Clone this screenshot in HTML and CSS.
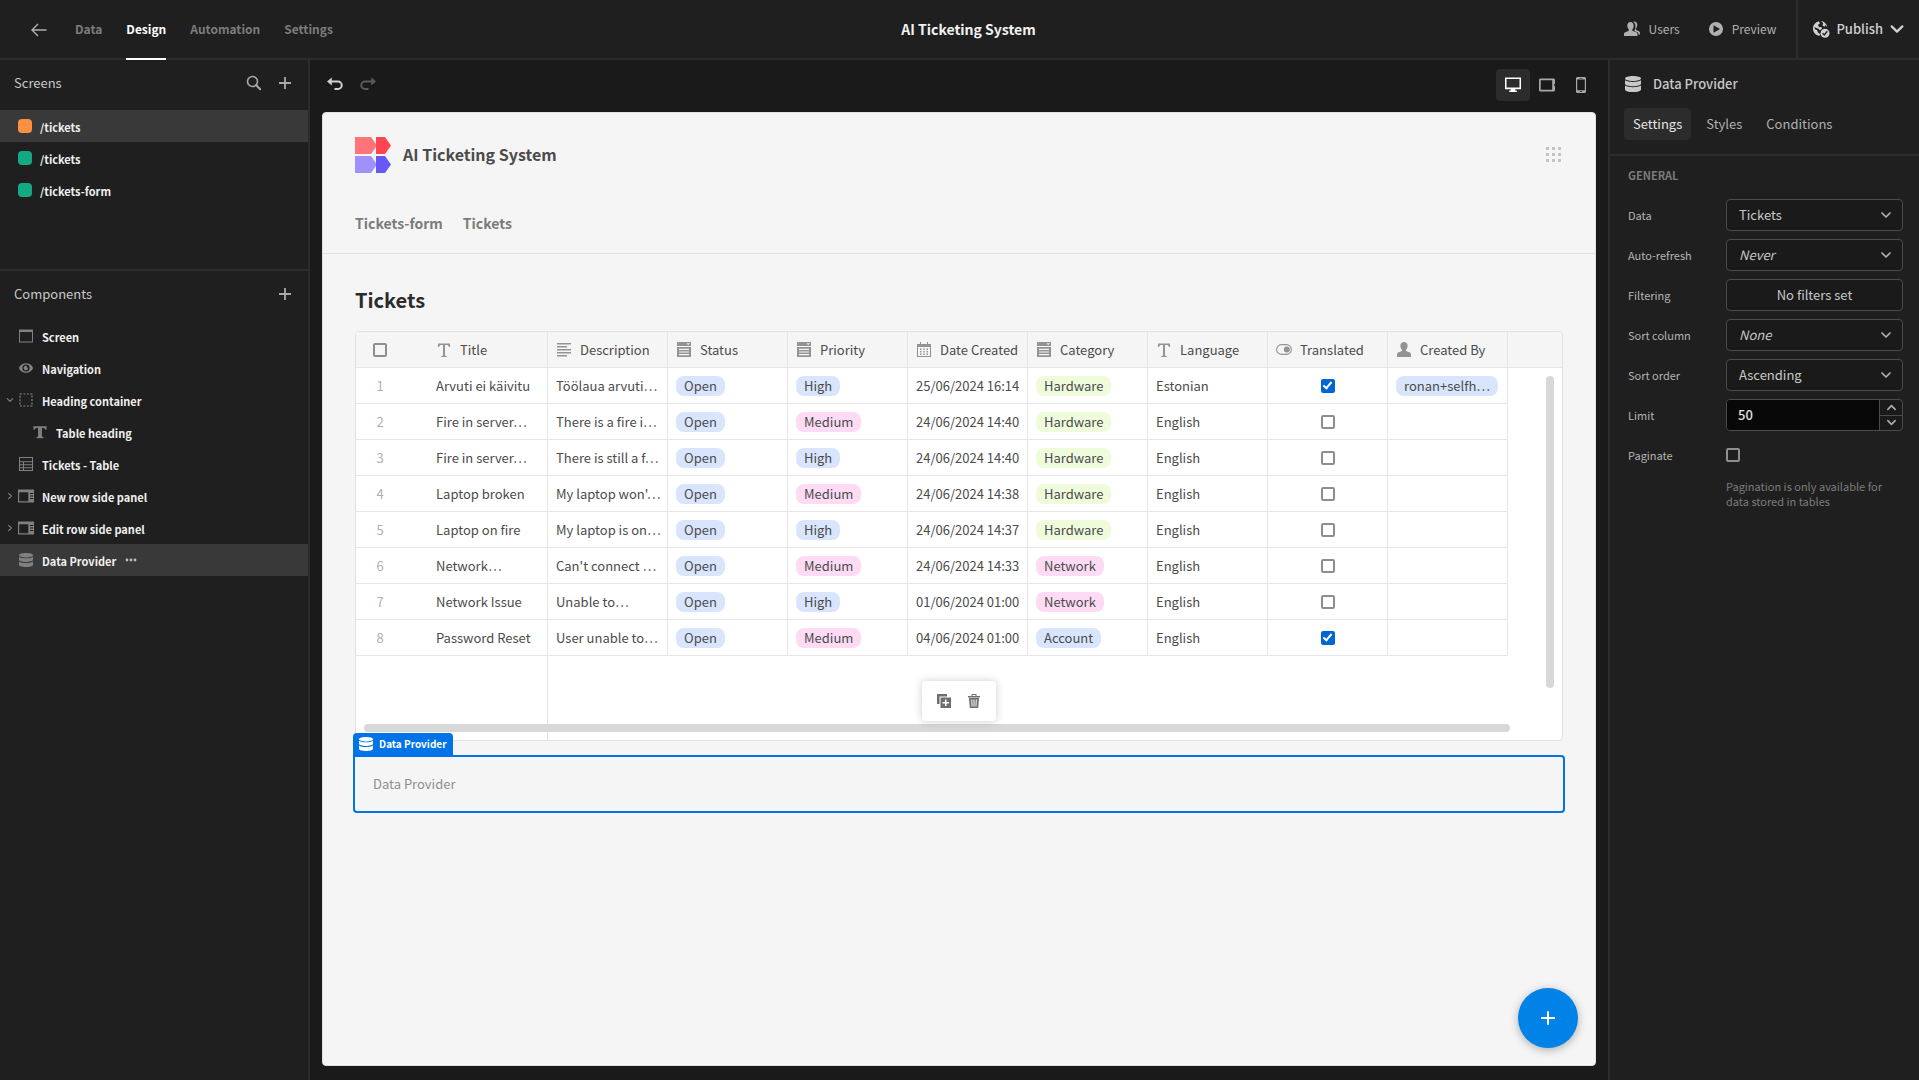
FILE: index.html
```html
<!DOCTYPE html>
<html lang="en">
<head>
<meta charset="utf-8">
<title>AI Ticketing System</title>
<meta name="viewport" content="width=device-width, initial-scale=1">
<link rel="stylesheet" href="styles.css">
</head>
<body>
<svg class="sprite" aria-hidden="true">
  <symbol id="i-text" viewBox="0 0 16 16"><path d="M2 1.500h12v3.600h-1.200C12.500 3.500 12.200 3 11 3H9v10c0 .8.400 1 1.800 1.100V15H5.200v-.9C6.600 14 7 13.800 7 13V3H5C3.800 3 3.500 3.500 3.200 5.100H2z"/></symbol>
  <symbol id="i-textbold" viewBox="0 0 16 16"><path d="M.5 1.500h15v4h-1.500C13.700 4 13.400 3.400 12 3.400h-1.800v9.200c0 .9.500 1.200 1.900 1.300V15H3.900v-1.100c1.400-.1 1.900-.4 1.900-1.300V3.400H4C2.600 3.400 2.300 4 2 5.500H.5z"/></symbol>
  <symbol id="i-lines" viewBox="0 0 16 16"><path d="M1 1h14v1.500H1zM1 4h10v1.500H1zM1 7h14v1.500H1zM1 10h14v1.500H1zM1 13h10v1.500H1z"/></symbol>
  <symbol id="i-dropdown" viewBox="0 0 16 16"><path fill-rule="evenodd" d="M1 0h14v4H1zm9.500 1.200 1.700 1.700 1.700-1.700zM1 5h14v10H1zM3 6.700v1.200h10V6.700zm0 2.700v1.200h10V9.400zm0 2.700v1.200h10v-1.200z"/></symbol>
  <symbol id="i-calendar" viewBox="0 0 16 16"><path fill-rule="evenodd" d="M4 0h1v2h6V0h1v2h3v13H1V2h3zM2 5v9h12V5zm2 1.500h1.500V8H4zm3.200 0h1.500V8H7.200zm3.300 0H12V8h-1.500zM4 9h1.500v1.500H4zm3.200 0h1.500v1.500H7.200zm3.300 0H12v1.500h-1.500zM4 11.500h1.500V13H4zm3.200 0h1.500V13H7.200zm3.300 0H12V13h-1.500z"/></symbol>
  <symbol id="i-toggle" viewBox="0 0 16 16"><rect x=".6" y="2.600" width="14.800" height="9.800" rx="4.900" fill="none" stroke="currentColor" stroke-width="1.100"/><circle cx="10.800" cy="7.500" r="3"/></symbol>
  <symbol id="i-user" viewBox="0 0 16 16"><path d="M8 0c2.200 0 3.600 1.600 3.600 3.900 0 1.500-.6 2.900-1.400 3.700-.4.500-.3 1.400.4 1.700l3.200 1.200c.8.300 1.200 1 1.200 1.800V15H1v-2.700c0-.8.500-1.500 1.200-1.800l3.200-1.200c.7-.3.800-1.200.4-1.700-.8-.8-1.400-2.200-1.400-3.700C4.400 1.600 5.800 0 8 0z"/></symbol>
  <symbol id="i-users" viewBox="0 0 18 16"><path d="M7.500 1C9.400 1 10.700 2.500 10.700 4.600c0 1.500-.5 2.800-1.200 3.700-.4.500-.3 1.400.4 1.700l3.300 1.300c.8.300 1.300 1 1.300 1.800V15H1v-1.900c0-.8.500-1.500 1.300-1.800L5.200 10c.7-.3.800-1.200.4-1.700-.8-.9-1.300-2.200-1.300-3.700C4.300 2.500 5.600 1 7.500 1z"/><path d="M10.300.7c2.200-.5 4 1 4 3.400 0 1.500-.6 2.500-1.300 3.400-.4.500-.2 1.300.4 1.600l2.500 1.200c.7.300 1.100.9 1.100 1.700v1.500h-1.400c-.1-1.300-.7-2-1.800-2.400l-2.500-1.200c.7-1.200 1.200-2.900 1.200-4.600 0-1.900-.8-3.500-2.200-4.600z"/></symbol>
  <symbol id="i-play" viewBox="0 0 16 16"><path fill-rule="evenodd" d="M8 1a7 7 0 1 1 0 14A7 7 0 0 1 8 1zM5.500 4.300v7.400L12 8z"/></symbol>
  <symbol id="i-globe" viewBox="0 0 18 18"><path d="M6.800 1.200C3.500 2 1 5 1 8.500c0 3.800 2.800 7 6.500 7.400l.6-2-2.200-1.300-.7-2.400L3 9.300l-.7-2.200 1.600.6 2.400 1 1.700 1.500L9.600 9l.7-1-1.600-1-1.700.2-1-2.400 2-1.400zM9 1l2.200 2.300-.7 2.200 2 1.200 1-1.600 1.600 1.800.4 1.300c-.2-3.600-2.900-6.600-6.500-7.200z"/><circle cx="13" cy="13.200" r="4.500"/><path d="M10.600 13.300l1.700 1.700 3-3.700" fill="none" stroke="#1f1f1f" stroke-width="1.400"/></symbol>
  <symbol id="i-chevron" viewBox="0 0 12 12"><path d="M2 4l4 4 4-4" fill="none" stroke="currentColor" stroke-width="1.700" stroke-linecap="round" stroke-linejoin="round"/></symbol>
  <symbol id="i-plus" viewBox="0 0 14 14"><path d="M6.100 1h1.800v5.100H13v1.800H7.900V13H6.100V7.900H1V6.100h5.100z"/></symbol>
  <symbol id="i-search" viewBox="0 0 16 16"><path d="M10.300 10.300 14.200 14.200" stroke="currentColor" stroke-width="2" stroke-linecap="round"/><circle cx="6.500" cy="6.500" r="5" fill="none" stroke="currentColor" stroke-width="1.600"/></symbol>
  <symbol id="i-back" viewBox="0 0 16 16"><path d="M15.500 8H1.200M7 2 1 8l6 6" fill="none" stroke="currentColor" stroke-width="1.400"/></symbol>
  <symbol id="i-undo" viewBox="0 0 16 16"><path d="M4 4.500h7a3.700 3.700 0 0 1 0 7.500H7.500" fill="none" stroke="currentColor" stroke-width="2"/><path d="M4.800.5v8L0 4.500z"/></symbol>
  <symbol id="i-redo" viewBox="0 0 16 16"><path d="M12 4.500H5A3.700 3.700 0 0 0 5 12h3.500" fill="none" stroke="currentColor" stroke-width="2"/><path d="M11.200.5v8l4.800-4z"/></symbol>
  <symbol id="i-desktop" viewBox="0 0 16 16"><path fill-rule="evenodd" d="M0 .5h16v11.700h-5.800v1.300h1.600V15H4.200v-1.500h1.600v-1.300H0zM1.500 2v8.600h13V2z"/></symbol>
  <symbol id="i-tablet" viewBox="0 0 16 16"><path fill-rule="evenodd" d="M1 1.500h14l1 1v4.200l-.8.500v1.600l.8.500v4.200l-1 1H1l-1-1v-11zM1.700 3.200v9.600h11.500V3.200z"/></symbol>
  <symbol id="i-phone" viewBox="0 0 16 16"><path fill-rule="evenodd" d="M4 0h8l1 1v14l-1 1H4l-1-1V1zm.2 2.400v10.800h7.600V2.400zM6.500.9v.6h3V.9zm.7 13.200v1h1.600v-1z"/></symbol>
  <symbol id="i-data" viewBox="0 0 16 16"><path d="M8 0c4.400 0 8 1 8 2.500S12.400 5 8 5 0 4 0 2.500 3.600 0 8 0z"/><path d="M0 4.300C1.800 5.500 5 6 8 6s6.200-.5 8-1.700v3.500C16 9.300 12.400 10.300 8 10.300S0 9.300 0 7.800z"/><path d="M0 9.600c1.800 1.200 5 1.700 8 1.700s6.200-.5 8-1.700v3.800C16 15 12.400 16 8 16s-8-1-8-2.600z"/></symbol>
  <symbol id="i-screen" viewBox="0 0 14 14"><path fill-rule="evenodd" d="M0 .5h14v13H0zm1 2.500v9.500h12V3z"/></symbol>
  <symbol id="i-eye" viewBox="0 0 14 14"><path fill-rule="evenodd" d="M7 2.200c3.800 0 7 3.200 7 4.800s-3.200 4.800-7 4.800S0 8.600 0 7s3.200-4.800 7-4.800zm0 1.200a3.600 3.600 0 1 0 0 7.200 3.600 3.600 0 0 0 0-7.200z"/><path d="M7 4.800c.5 0 .8.100 1 .2a1.100 1.100 0 0 0 1 1.700A2.200 2.200 0 1 1 7 4.800z"/></symbol>
  <symbol id="i-dashed" viewBox="0 0 14 14"><rect x="1" y="1" width="12" height="12" fill="none" stroke="currentColor" stroke-width="1.200" stroke-dasharray="2 1.400"/></symbol>
  <symbol id="i-table" viewBox="0 0 14 14"><path fill-rule="evenodd" d="M0 0h14v14H0zm1 1v3.300h12V1zm0 4.300v2h3v-2zm4 0v2h8v-2zm-4 3v2h3v-2zm4 0v2h8v-2zm-4 3V13h3v-1.700zm4 0V13h8v-1.700z"/></symbol>
  <symbol id="i-panel" viewBox="0 0 16 14"><path fill-rule="evenodd" d="M0 .5h16v13H0zm1.200 2.700v9.100h9.100V3.200zM12 4v1h3V4zm0 2.500v1h3v-1zM12 9v1h3V9z"/></symbol>
  <symbol id="i-copy" viewBox="0 0 16 16"><path d="M1 1h10v2.500H3.500V11H1z"/><path fill-rule="evenodd" d="M4.500 4.500H15V15H4.500zM9 6.500V9H6.500v1.500H9V13h1.500v-2.500H13V9h-2.500V6.500z"/></symbol>
  <symbol id="i-trash" viewBox="0 0 16 16"><path fill-rule="evenodd" d="M5.500 1h5v2H14v1.500H2V3h3.500zm1 1v1h3V2zM3 5h10l-.8 10H3.800zm2.200 1.500.4 7h.9l-.3-7zm2.300 0v7h1v-7zm2.300 0-.3 7h.9l.4-7z"/></symbol>
  <symbol id="i-apps" viewBox="0 0 15 15"><path d="M0 0h3v3H0zM6 0h3v3H6zM12 0h3v3h-3zM0 6h3v3H0zM6 6h3v3H6zM12 6h3v3h-3zM0 12h3v3H0zM6 12h3v3H6zM12 12h3v3h-3z"/></symbol>
  <symbol id="i-more" viewBox="0 0 12 12"><circle cx="2" cy="6" r="1.400"/><circle cx="6" cy="6" r="1.400"/><circle cx="10" cy="6" r="1.400"/></symbol>
</svg>

<header class="topbar">
  <nav class="topbar-left">
    <a class="back" href="#" aria-label="Back"><svg class="icon"><use href="#i-back"/></svg></a>
    <a class="tab" href="#">Data</a>
    <a class="tab is-active" href="#">Design</a>
    <a class="tab" href="#">Automation</a>
    <a class="tab" href="#">Settings</a>
  </nav>
  <div class="app-name">AI Ticketing System</div>
  <div class="topbar-right">
    <button class="action"><svg class="icon icon-wide"><use href="#i-users"/></svg>Users</button>
    <button class="action"><svg class="icon"><use href="#i-play"/></svg>Preview</button>
    <button class="publish"><svg class="icon icon-lg"><use href="#i-globe"/></svg>Publish<svg class="icon"><use href="#i-chevron"/></svg></button>
  </div>
</header>

<div class="builder">
  <aside class="sidebar">
    <section class="screens">
      <div class="panel-head"><h2>Screens</h2>
        <button aria-label="Search"><svg class="icon"><use href="#i-search"/></svg></button>
        <button aria-label="Add screen"><svg class="icon-sm"><use href="#i-plus"/></svg></button>
      </div>
      <ul class="list">
        <li class="item screen is-selected"><span class="dot dot-orange"></span><a href="#">/tickets</a></li>
        <li class="item screen"><span class="dot"></span><a href="#">/tickets</a></li>
        <li class="item screen"><span class="dot"></span><a href="#">/tickets-form</a></li>
      </ul>
    </section>
    <section class="components">
      <div class="panel-head"><h2>Components</h2>
        <button aria-label="Add component"><svg class="icon-sm"><use href="#i-plus"/></svg></button>
      </div>
      <ul class="list">
        <li class="item"><span class="caret"></span><svg class="icon"><use href="#i-screen"/></svg><a href="#">Screen</a></li>
        <li class="item"><span class="caret"></span><svg class="icon"><use href="#i-eye"/></svg><a href="#">Navigation</a></li>
        <li class="item"><svg class="caret"><use href="#i-chevron"/></svg><svg class="icon"><use href="#i-dashed"/></svg><a href="#">Heading container</a></li>
        <li class="item nested"><span class="caret"></span><svg class="icon"><use href="#i-textbold"/></svg><a href="#">Table heading</a></li>
        <li class="item"><span class="caret"></span><svg class="icon"><use href="#i-table"/></svg><a href="#">Tickets - Table</a></li>
        <li class="item"><svg class="caret is-closed"><use href="#i-chevron"/></svg><svg class="icon icon-panel"><use href="#i-panel"/></svg><a href="#">New row side panel</a></li>
        <li class="item"><svg class="caret is-closed"><use href="#i-chevron"/></svg><svg class="icon icon-panel"><use href="#i-panel"/></svg><a href="#">Edit row side panel</a></li>
        <li class="item is-selected"><span class="caret"></span><svg class="icon"><use href="#i-data"/></svg><a href="#">Data Provider</a><button class="more" aria-label="More"><svg><use href="#i-more"/></svg></button></li>
      </ul>
    </section>
  </aside>

  <main class="stage">
    <div class="toolbar">
      <button class="undo" aria-label="Undo"><svg class="icon"><use href="#i-undo"/></svg></button>
      <button class="redo" aria-label="Redo" disabled><svg class="icon"><use href="#i-redo"/></svg></button>
      <div class="devices">
        <button class="device is-active" aria-label="Desktop"><svg class="icon"><use href="#i-desktop"/></svg></button>
        <button class="device" aria-label="Tablet"><svg class="icon"><use href="#i-tablet"/></svg></button>
        <button class="device" aria-label="Mobile"><svg class="icon"><use href="#i-phone"/></svg></button>
      </div>
    </div>
    <div class="preview">
      <header class="app-head">
        <div class="brand">
          <svg class="logo" viewBox="0 0 36 36" aria-hidden="true">
            <path fill="#ff7479" d="M0 0h16l6 8.500L16 17H0z"/><path fill="#ff4552" d="M21 0h9l6 8.500L30 17h-9z"/>
            <path fill="#9f90fa" d="M0 19h16l6 8.500L16 36H0z"/><path fill="#6a58f6" d="M21 19h9l6 8.500L30 36h-9z"/>
          </svg>
          <h1>AI Ticketing System</h1>
          <button class="apps" aria-label="Apps"><svg><use href="#i-apps"/></svg></button>
        </div>
        <nav class="app-nav"><a href="#">Tickets-form</a><a href="#">Tickets</a></nav>
      </header>
      <div class="app-body">
        <h2 class="heading">Tickets</h2>
        <div class="grid">
          <table>
            <colgroup><col class="c-gutter"><col class="c"><col class="c"><col class="c"><col class="c"><col class="c"><col class="c"><col class="c"><col class="c"><col class="c"><col></colgroup>
            <thead><tr>
              <th class="gutter"><input type="checkbox" aria-label="Select all"></th>
              <th><span><svg class="icon"><use href="#i-text"/></svg>Title</span></th>
              <th><span><svg class="icon"><use href="#i-lines"/></svg>Description</span></th>
              <th><span><svg class="icon"><use href="#i-dropdown"/></svg>Status</span></th>
              <th><span><svg class="icon"><use href="#i-dropdown"/></svg>Priority</span></th>
              <th><span><svg class="icon"><use href="#i-calendar"/></svg>Date Created</span></th>
              <th><span><svg class="icon"><use href="#i-dropdown"/></svg>Category</span></th>
              <th><span><svg class="icon"><use href="#i-text"/></svg>Language</span></th>
              <th><span><svg class="icon"><use href="#i-toggle"/></svg>Translated</span></th>
              <th><span><svg class="icon"><use href="#i-user"/></svg>Created By</span></th>
              <th class="rest"></th>
            </tr></thead>
            <tbody>
              <tr><td class="gutter">1</td><td>Arvuti ei käivitu</td><td>Töölaua arvuti…</td><td><span class="tag">Open</span></td><td><span class="tag">High</span></td><td>25/06/2024 16:14</td><td><span class="tag green">Hardware</span></td><td>Estonian</td><td class="check"><input type="checkbox" checked aria-label="Translated"></td><td><span class="tag">ronan+selfh…</span></td><td class="rest"></td></tr>
              <tr><td class="gutter">2</td><td>Fire in server…</td><td>There is a fire i…</td><td><span class="tag">Open</span></td><td><span class="tag pink">Medium</span></td><td>24/06/2024 14:40</td><td><span class="tag green">Hardware</span></td><td>English</td><td class="check"><input type="checkbox" aria-label="Translated"></td><td></td><td class="rest"></td></tr>
              <tr><td class="gutter">3</td><td>Fire in server…</td><td>There is still a f…</td><td><span class="tag">Open</span></td><td><span class="tag">High</span></td><td>24/06/2024 14:40</td><td><span class="tag green">Hardware</span></td><td>English</td><td class="check"><input type="checkbox" aria-label="Translated"></td><td></td><td class="rest"></td></tr>
              <tr><td class="gutter">4</td><td>Laptop broken</td><td>My laptop won'…</td><td><span class="tag">Open</span></td><td><span class="tag pink">Medium</span></td><td>24/06/2024 14:38</td><td><span class="tag green">Hardware</span></td><td>English</td><td class="check"><input type="checkbox" aria-label="Translated"></td><td></td><td class="rest"></td></tr>
              <tr><td class="gutter">5</td><td>Laptop on fire</td><td>My laptop is on…</td><td><span class="tag">Open</span></td><td><span class="tag">High</span></td><td>24/06/2024 14:37</td><td><span class="tag green">Hardware</span></td><td>English</td><td class="check"><input type="checkbox" aria-label="Translated"></td><td></td><td class="rest"></td></tr>
              <tr><td class="gutter">6</td><td>Network…</td><td>Can't connect …</td><td><span class="tag">Open</span></td><td><span class="tag pink">Medium</span></td><td>24/06/2024 14:33</td><td><span class="tag pink">Network</span></td><td>English</td><td class="check"><input type="checkbox" aria-label="Translated"></td><td></td><td class="rest"></td></tr>
              <tr><td class="gutter">7</td><td>Network Issue</td><td>Unable to…</td><td><span class="tag">Open</span></td><td><span class="tag">High</span></td><td>01/06/2024 01:00</td><td><span class="tag pink">Network</span></td><td>English</td><td class="check"><input type="checkbox" aria-label="Translated"></td><td></td><td class="rest"></td></tr>
              <tr><td class="gutter">8</td><td>Password Reset</td><td>User unable to…</td><td><span class="tag">Open</span></td><td><span class="tag pink">Medium</span></td><td>04/06/2024 01:00</td><td><span class="tag">Account</span></td><td>English</td><td class="check"><input type="checkbox" checked aria-label="Translated"></td><td></td><td class="rest"></td></tr>
            </tbody>
            <tfoot><tr><td colspan="2"></td><td class="rest" colspan="9"></td></tr></tfoot>
          </table>
          <div class="scroll-y"></div>
          <div class="scroll-x"></div>
        </div>
        <div class="provider">
          <div class="provider-label"><svg><use href="#i-data"/></svg>Data Provider</div>
          <div class="provider-tools">
            <button aria-label="Duplicate"><svg class="icon"><use href="#i-copy"/></svg></button>
            <button aria-label="Delete"><svg class="icon"><use href="#i-trash"/></svg></button>
          </div>
          Data Provider
        </div>
      </div>
      <button class="fab" aria-label="Add row"><svg><use href="#i-plus"/></svg></button>
    </div>
  </main>

  <aside class="settings">
    <div class="settings-title"><svg class="icon"><use href="#i-data"/></svg>Data Provider</div>
    <div class="settings-tabs">
      <button class="is-active">Settings</button><button>Styles</button><button>Conditions</button>
    </div>
    <form class="fields">
      <h3>GENERAL</h3>
      <div class="field"><label for="data">Data</label><div class="select"><select id="data"><option>Tickets</option></select><svg><use href="#i-chevron"/></svg></div></div>
      <div class="field"><label for="refresh">Auto-refresh</label><div class="select"><select id="refresh" class="empty"><option>Never</option></select><svg><use href="#i-chevron"/></svg></div></div>
      <div class="field"><label for="filter">Filtering</label><button type="button" id="filter" class="filter">No filters set</button></div>
      <div class="field"><label for="sortcol">Sort column</label><div class="select"><select id="sortcol" class="empty"><option>None</option></select><svg><use href="#i-chevron"/></svg></div></div>
      <div class="field"><label for="sortord">Sort order</label><div class="select"><select id="sortord"><option>Ascending</option></select><svg><use href="#i-chevron"/></svg></div></div>
      <div class="field"><label for="limit">Limit</label>
        <div class="stepper"><input type="number" id="limit" value="50">
          <div class="steps"><button type="button" aria-label="Increase"><svg class="up"><use href="#i-chevron"/></svg></button><button type="button" aria-label="Decrease"><svg><use href="#i-chevron"/></svg></button></div>
        </div>
      </div>
      <div class="field"><label for="paginate">Paginate</label><input type="checkbox" id="paginate"></div>
      <p class="help">Pagination is only available for data stored in tables</p>
    </form>
  </aside>
</div>
</body>
</html>
```
FILE: styles.css
```css
*, *::before, *::after { box-sizing: border-box; }

body {
  margin: 0;
  min-height: 100vh;
  display: flex;
  flex-direction: column;
  background: #1a1a1a;
  color: #c8c8c8;
  font: 400 13px/20px "Noto Sans CJK SC", "Source Sans 3", sans-serif;
}

h1, h2, h3, p, ul { margin: 0; padding: 0; }
ul { list-style: none; }
a { color: inherit; text-decoration: none; }
button { margin: 0; padding: 0; border: 0; background: none; color: inherit; font: inherit; cursor: pointer; }
svg { fill: currentColor; display: block; flex: none; }
.sprite { position: absolute; width: 0; height: 0; }
.icon { width: 16px; height: 16px; }
.icon-wide { width: 18px; }
.icon-lg { width: 18px; height: 18px; }
.icon-sm { width: 14px; height: 14px; }

/* Top bar */
.topbar {
  display: grid;
  grid-template-columns: 1fr auto 1fr;
  height: 60px;
  padding-left: 18px;
  background: #1f1f1f;
  border-bottom: 2px solid #2c2c2c;
}
.topbar-left { display: flex; gap: 24px; }
.back { display: flex; align-items: center; padding-left: 13px; width: 33px; color: #b0b0b0; }
.tab { display: flex; align-items: center; height: 60px; padding-bottom: 2px; color: #7c7c7c; font-size: 12px; font-weight: 700; }
.tab.is-active { color: #fff; border-bottom: 2px solid #fff; padding-bottom: 0; }
.app-name { align-self: center; padding-bottom: 2px; color: #f2f2f2; font-size: 14px; font-weight: 700; }
.topbar-right { display: flex; justify-content: flex-end; }
.action { display: flex; align-items: center; gap: 8px; margin-right: 20px; padding: 0 0 2px 8px; color: #b0b0b0; font-size: 12px; }
.publish { display: flex; align-items: center; gap: 6px; padding: 0 14px 2px; color: #d0d0d0; font-weight: 500; border-left: 2px solid #2c2c2c; }

.builder { flex: 1; display: flex; align-items: stretch; }

/* Left sidebar */
.sidebar { width: 310px; background: #1f1f1f; border-right: 2px solid #2c2c2c; }
.screens { min-height: 211px; border-bottom: 2px solid #2c2c2c; }
.panel-head { display: flex; align-items: center; gap: 16px; height: 46px; padding: 0 16px 0 14px; color: #a8a8a8; }
.panel-head h2 { flex: 1; font-size: 13px; font-weight: 400; color: #c8c8c8; }
.list { padding-top: 4px; }
.components .list { padding-top: 3px; }
.item { display: flex; align-items: center; height: 32px; color: #f0f0f0; font-size: 11px; font-weight: 700; }
.item a { padding-top: 1px; }
.item .icon { margin: 0 8px 0 4px; color: #808080; padding: 1px; }
.item .icon-panel { padding: 0; }
.item .caret { width: 8px; height: 8px; margin: 0 0 0 6px; color: #808080; }
.caret.is-closed { transform: rotate(-90deg); }
.nested { padding-left: 14px; }
.item.screen { padding-left: 18px; gap: 8px; }
.is-selected { background: #393939; }
.dot { width: 14px; height: 14px; border-radius: 4px; background: #12a983; }
.dot-orange { background: #fa9140; }
.more { margin-left: 9px; color: #c0c0c0; }
.more svg { width: 12px; height: 12px; }

/* Canvas */
.stage { flex: 1; min-width: 0; display: flex; flex-direction: column; padding: 0 12px 14px; }
.toolbar { display: flex; height: 52px; align-items: center; gap: 17px; margin-right: -2px; padding: 0 0 2px 5px; }
.undo { color: #d0d0d0; }
.redo { color: #5a5a5a; }
.devices { display: flex; margin-left: auto; }
.device { display: grid; place-items: center; width: 34px; height: 32px; border-radius: 4px; color: #a8a8a8; }
.device.is-active { background: #2c2c2c; color: #fff; }
.preview { position: relative; flex: 1; background: #f5f5f5; border: 1px solid #e1e1e1; border-radius: 4px; color: #4b4b4b; }

.app-head { padding: 24px 32px 0; border-bottom: 1px solid #e1e1e1; }
.brand { display: flex; align-items: center; gap: 12px; }
.logo { width: 36px; height: 36px; }
.brand h1 { flex: 1; padding-bottom: 2px; font-size: 16px; line-height: 24px; font-weight: 700; }
.apps { margin-right: 2px; padding-bottom: 2px; color: #c4c4c4; }
.apps svg { width: 15px; height: 15px; }
.app-nav { display: flex; gap: 20px; padding: 38px 0 18px; font-size: 14px; line-height: 24px; font-weight: 700; color: #7b7b7b; }

.app-body { padding: 32px; }
.heading { font-size: 20px; line-height: 28px; font-weight: 700; color: #2c2c2c; margin-bottom: 17px; }

.grid { position: relative; background: #fff; border: 1px solid #e1e1e1; border-radius: 4px; overflow: hidden; }
table { width: 100%; table-layout: fixed; border-collapse: separate; border-spacing: 0; }
.c-gutter { width: 72px; }
.c { width: 120px; }
th { height: 36px; padding: 0 8px; background: #f5f5f5; border-right: 1px solid #e6e6e6; border-bottom: 1px solid #e6e6e6; font-weight: 400; }
th span { display: flex; align-items: center; gap: 8px; white-space: nowrap; }
th .icon { color: #939393; }
td { height: 36px; padding: 0 8px; border-right: 1px solid #e6e6e6; border-bottom: 1px solid #e6e6e6; white-space: nowrap; }
th.gutter, td.gutter { border-right: 0; padding: 0 24px 0 0; text-align: center; color: #b0b0b0; }
th.rest { border-right: 0; }
td.rest { border: 0; }
tfoot td { height: 84px; border-bottom: 0; }
.check { text-align: center; }
.tag { display: inline-block; padding: 0 8px; border-radius: 8px; background: #d9e5fd; line-height: 20px; vertical-align: middle; }
.green { background: #effcdb; }
.pink { background: #fddbf5; }

input[type="checkbox"] {
  appearance: none;
  display: inline-grid;
  place-items: center;
  width: 14px;
  height: 14px;
  margin: 0;
  border: 2px solid #8e8e8e;
  border-radius: 2px;
  vertical-align: middle;
}
th input[type="checkbox"], td input[type="checkbox"] { display: grid; margin: 0 auto; }
input[type="checkbox"]:checked { background: #0066d4; border-color: #0066d4; }
input[type="checkbox"]:checked::before { content: ""; width: 5px; height: 9px; margin-top: -2px; border: solid #fff; border-width: 0 2px 2px 0; transform: rotate(40deg); }

.scroll-y, .scroll-x { position: absolute; background: #d8d8d8; border-radius: 4px; }
.scroll-y { top: 44px; right: 8px; bottom: 52px; width: 8px; }
.scroll-x { left: 8px; right: 52px; bottom: 8px; height: 8px; }

.provider { position: relative; margin: 14px -2px 0; padding: 17px 18px; border: 2px solid #0073e6; border-radius: 0 4px 4px 4px; color: #8e8e8e; }
.provider-label { position: absolute; left: -2px; bottom: 100%; display: flex; align-items: center; gap: 6px; height: 24px; padding: 0 6px 2px; background: #0073e6; border-radius: 4px 4px 0 0; color: #fff; font-size: 10px; font-weight: 700; }
.provider-label svg { width: 14px; height: 14px; }
.provider-tools { position: absolute; left: 50%; bottom: calc(100% + 36px); transform: translateX(-50%); display: flex; gap: 14px; padding: 12px 14px; background: #fff; border-radius: 4px; box-shadow: 0 0 8px rgba(0, 0, 0, .2); color: #6e6e6e; }

.fab { position: absolute; right: 17px; bottom: 17px; display: grid; place-items: center; width: 60px; height: 60px; border-radius: 50%; background: #0082e6; color: #fff; box-shadow: 0 2px 8px rgba(0, 0, 0, .3); }
.fab svg { width: 16px; height: 16px; }

/* Right settings panel */
.settings { width: 311px; background: #1f1f1f; border-left: 2px solid #2c2c2c; }
.settings-title { display: flex; align-items: center; gap: 12px; height: 48px; padding-left: 15px; font-weight: 500; }
.settings-tabs { display: flex; gap: 6px; padding: 0 14px 14px; border-bottom: 2px solid #2c2c2c; color: #b0b0b0; }
.settings-tabs button { height: 32px; padding: 0 9px; border-radius: 4px; }
.settings-tabs .is-active { background: #2c2c2c; color: #e4e4e4; }
.fields { display: flex; flex-direction: column; gap: 8px; padding: 9px 16px 0 18px; }
.fields h3 { margin-bottom: 6px; font-size: 11px; line-height: 20px; font-weight: 700; color: #7c7c7c; }
.field { display: grid; grid-template-columns: 98px 1fr; align-items: center; height: 32px; }
.field label { font-size: 11px; color: #b4b4b4; }
.select { position: relative; }
select, .filter, .stepper { width: 100%; height: 32px; border: 1px solid #4b4b4b; border-radius: 4px; background: #1a1a1a; color: #c8c8c8; }
select { appearance: none; padding: 0 12px; font: inherit; display: block; }
select.empty { font-style: italic; }
.select svg { position: absolute; right: 11px; top: 10px; width: 12px; height: 12px; color: #b0b0b0; pointer-events: none; }
.stepper { display: flex; overflow: hidden; }
.stepper input { flex: 1; min-width: 0; padding: 0 11px; border: 0; background: #080808; color: #e0e0e0; font: inherit; font-weight: 500; appearance: textfield; }
.stepper input::-webkit-inner-spin-button { appearance: none; margin: 0; }
.steps { display: flex; flex-direction: column; width: 23px; border-left: 1px solid #4b4b4b; }
.steps button { flex: 1; display: grid; place-items: center; color: #b0b0b0; }
.steps button + button { border-top: 1px solid #4b4b4b; }
.steps svg { width: 11px; height: 11px; }
.steps .up { transform: rotate(180deg); }
.help { margin-left: 98px; font-size: 11px; line-height: 15px; color: #7c7c7c; }
```
